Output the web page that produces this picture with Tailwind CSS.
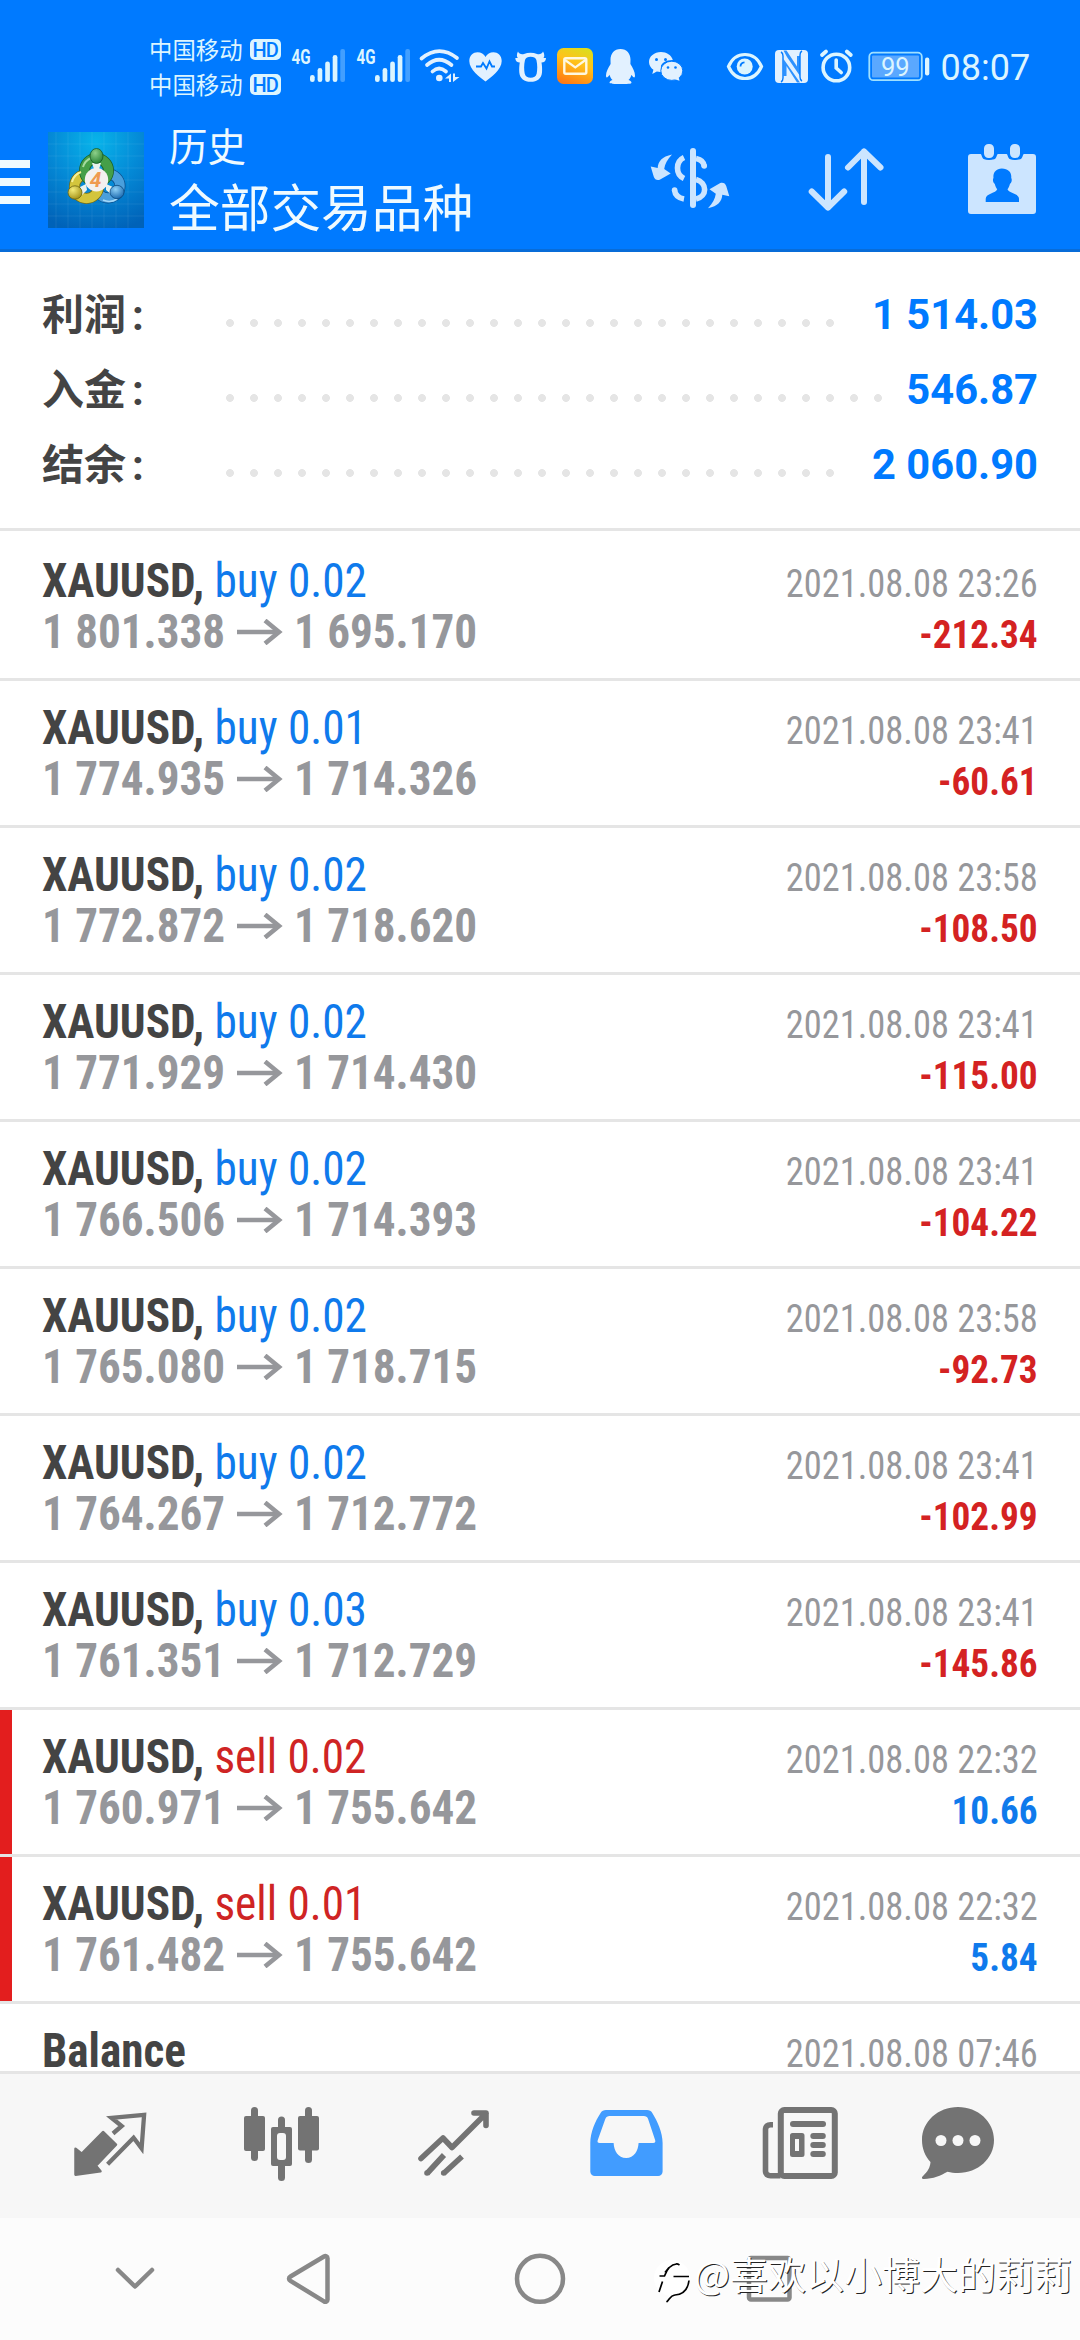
<!DOCTYPE html>
<html lang="zh-CN">
<head>
<meta charset="utf-8">
<title>历史</title>
<script src="https://cdn.jsdelivr.net/npm/@tailwindcss/browser@4"></script>
</head>
<body class="w-[1080px] h-[2340px] overflow-hidden bg-white font-['Roboto','Noto_Sans_CJK_SC',sans-serif] flex flex-col">

<!-- status bar -->
<div class="h-[108px] shrink-0 bg-[#007aff] flex text-[#dcf5ff]">
  <div class="w-[289px] pl-[149px] pt-[33px] flex flex-col text-[23.4px] leading-[32px] gap-[3px] font-['Noto_Sans_CJK_SC',sans-serif]">
    <div class="flex items-center gap-[7px]"><span class="whitespace-nowrap">中国移动</span><span class="w-[31px] h-[21px] rounded-[5px] bg-[#dcf5ff] text-[#007aff] font-['Roboto',sans-serif] font-medium text-[20px] leading-[22px] text-center tracking-[-1px]">HD</span></div>
    <div class="flex items-center gap-[7px]"><span class="whitespace-nowrap">中国移动</span><span class="w-[31px] h-[21px] rounded-[5px] bg-[#dcf5ff] text-[#007aff] font-['Roboto',sans-serif] font-medium text-[20px] leading-[22px] text-center tracking-[-1px]">HD</span></div>
  </div>
  <svg class="w-[65px] h-[108px]" viewBox="289 0 65 108" fill="currentColor"><text x="291.5" y="64" font-size="20" font-weight="700" textLength="19" lengthAdjust="spacingAndGlyphs">4G</text><rect x="310" y="75" width="4.7" height="7" rx="2.3"/><rect x="317.6" y="68" width="4.7" height="14" rx="2.3"/><rect x="325.2" y="61.5" width="4.7" height="20.5" rx="2.3"/><rect x="332.7" y="55" width="4.7" height="27" rx="2.3"/><rect x="340.3" y="49" width="4.7" height="33" rx="2" opacity=".3"/></svg>
  <svg class="w-[64px] h-[108px]" viewBox="289 0 64 108" fill="currentColor"><text x="291.5" y="64" font-size="20" font-weight="700" textLength="19" lengthAdjust="spacingAndGlyphs">4G</text><rect x="310" y="75" width="4.7" height="7" rx="2.3"/><rect x="317.6" y="68" width="4.7" height="14" rx="2.3"/><rect x="325.2" y="61.5" width="4.7" height="20.5" rx="2.3"/><rect x="332.7" y="55" width="4.7" height="27" rx="2.3"/><rect x="340.3" y="49" width="4.7" height="33" rx="2" opacity=".3"/></svg>
  <!-- wifi -->
  <svg class="w-[46px] h-[108px]" viewBox="418 0 46 108" fill="none" stroke="#e2f1ff" stroke-width="3.7" stroke-linecap="round"><path d="M421.5 58.5Q439 44 457 58M427 65Q439 54.5 451.5 65M432.5 71.5Q439 65.500 446 71.500"/><circle cx="439.300" cy="78" r="3.300" fill="#e2f1ff" stroke="none"/><path d="M451 73.500v8.500h-2v-3.500h-4zM453 73.500h2v3.500h4.500l-6.500 5z" fill="#e2f1ff" stroke="none"/></svg>
  <!-- heart rate -->
  <svg class="w-[44px] h-[108px]" viewBox="464 0 44 108"><path d="M485.500 81.500C480 77 469.300 70 469.300 61c0-5.500 4-8.700 8.200-8.700 3.500 0 6.500 1.800 8 4.700 1.500-2.900 4.500-4.700 8-4.700 4.200 0 8.200 3.200 8.200 8.700 0 9-10.700 16-16.200 20.500z" fill="#e2f1ff"/><path d="M476 66.500h5l2-3.500 3.500 5.500 3-7 2.500 5h3" fill="none" stroke="#007aff" stroke-width="1.800"/></svg>
  <!-- ox -->
  <svg class="w-[44px] h-[108px]" viewBox="508 0 44 108" fill="#e2f1ff"><path fill-rule="evenodd" d="M518 51.500c1 2.500 3.500 3.200 6 2.500 4-1.700 9-1.700 13 0 2.500.7 5 0 6-2.500 1.600 2.500 1.700 5 .5 6.500h2.500c0 3-2 4.500-4.500 4.500.5 3 .8 6 .5 10-.4 6-5 9.300-11.300 9.300s-11-3.300-11.400-9.300c-.3-4 0-7 .5-10-2.500 0-4.500-1.500-4.500-4.500h2.500c-1.200-1.500-1.200-4 .2-6.500zM525 60c-1.200 5-1 9.500-.3 13.500.6 3 3 4.300 6 4.300s5.400-1.300 6-4.300c.7-4 .9-8.500-.3-13.500-.8-2.500-2.700-3.200-5.700-3.200s-4.900.7-5.700 3.200z"/></svg>
  <!-- mail -->
  <svg class="w-[48px] h-[108px]" viewBox="552 0 48 108"><defs><linearGradient id="m" x1=".7" y1="0" x2=".3" y2="1"><stop offset="0" stop-color="#dddc1c"/><stop offset=".4" stop-color="#ffc21a"/><stop offset="1" stop-color="#ff7a14"/></linearGradient></defs><rect x="557" y="48" width="36" height="36" rx="6.500" fill="url(#m)"/><rect x="564.300" y="58.300" width="22" height="15.500" rx="1.500" fill="none" stroke="#fff8e0" stroke-width="2.400"/><path d="M565 60l10.300 7.500L585.500 60" fill="none" stroke="#fff8e0" stroke-width="2.200"/></svg>
  <!-- penguin -->
  <svg class="w-[42px] h-[108px]" viewBox="600 0 42 108" fill="#e2f1ff"><path d="M620.500 49c-6.300 0-10 4.700-10 10.500l.1 4.500c-2.500 4-4.600 8-4.600 11.500 0 2.800 1.500 2.500 3.500-.8.600 2.100 1.600 3.900 3 5.300-2 .8-3 1.700-3 2.600 0 1.200 2 1.400 5 1.400h12c3 0 5-.2 5-1.400 0-.9-1-1.800-3-2.600 1.400-1.400 2.400-3.200 3-5.300 2 3.300 3.500 3.600 3.500.8 0-3.500-2.100-7.500-4.600-11.500l.1-4.500c0-5.800-3.700-10.500-10-10.500z"/></svg>
  <!-- chat bubbles -->
  <svg class="w-[78px] h-[108px]" viewBox="642 0 78 108" fill="#e2f1ff"><path d="M661 52c-6.700 0-12 4.400-12 10 0 3.200 1.700 5.900 4.400 7.700l-1.100 4.300 4.500-2.500 4 .5"/><path d="M661 52c5.500 0 10.500 3.200 11.800 8-7 0-12.500 3-12.500 9l.5 3-9-4z"/><ellipse cx="671.800" cy="70.800" rx="11" ry="9.600" stroke="#007aff" stroke-width="1"/><path d="M674 79l5.500 1.700-1-4z"/><g fill="#007aff"><circle cx="656.500" cy="59.500" r="1.500"/><circle cx="665.500" cy="59.500" r="1.500"/><circle cx="668" cy="67.500" r="1.300"/><circle cx="675.500" cy="67.500" r="1.300"/></g></svg>
  <!-- eye -->
  <svg class="w-[50px] h-[108px]" viewBox="720 0 50 108" fill="none" stroke="currentColor" stroke-width="3.200"><path d="M728.500 66.500C732 58.500 738 54.500 745 54.500s13 4 16.500 12C758 74.500 752 78.500 745 78.500s-13-4-16.500-12z"/><circle cx="744.700" cy="66.500" r="8" fill="currentColor" stroke="none"/><path d="M740.500 66.500c0-2.500 1.500-4 4-4.200" stroke="#007aff" stroke-width="1.800"/></svg>
  <!-- nfc -->
  <svg class="w-[45px] h-[108px]" viewBox="770 0 45 108"><rect x="775" y="50" width="33" height="33" rx="4" fill="#e2f1ff"/><path d="M781 52q2 1 2 4v22q0 3-2 4M802 51q-2 1-2 4v22q0 3 2 4" stroke="#007aff" stroke-width="1.400" fill="none"/><path d="M783.500 50.500l3 0 10.500 16V56h3v20l-13-19zM800 82.500h-3L786.500 66V76h-3V59z" fill="#007aff" opacity=".8"/></svg>
  <!-- alarm -->
  <svg class="w-[45px] h-[108px]" viewBox="815 0 45 108" fill="none" stroke="currentColor" stroke-width="3.600" stroke-linecap="round"><circle cx="836.400" cy="67.500" r="13.300"/><path d="M822 55l4-3.500M850.800 55l-4-3.500" stroke-width="3.800"/><path d="M836.200 60v8l5 4.500"/></svg>
  <!-- battery and time -->
  <svg class="w-[220px] h-[108px]" viewBox="860 0 220 108" fill="currentColor"><rect x="869.300" y="52.700" width="52.500" height="27.500" rx="4" fill="none" stroke="#9fe0ff" stroke-width="1.800"/><rect x="872" y="55.500" width="47" height="22" rx="1" fill="#5aa8ff"/><rect x="925" y="57.500" width="4.300" height="18" rx="2"/><text x="881" y="75.500" font-size="25.500">99</text><text x="940.500" y="80" font-size="36">08:07</text></svg>
</div>

<!-- app bar -->
<header class="h-[144px] shrink-0 bg-[#007aff] border-b-3 border-[#086cd8] flex items-start text-[#effaff]">
  <div class="w-[30px] mt-[52px] flex flex-col gap-[10px]"><i class="h-2 bg-[#effaff]"></i><i class="h-2 bg-[#effaff]"></i><i class="h-2 bg-[#effaff]"></i></div>
  <svg class="ml-[18px] mt-6 w-24 h-24" viewBox="0 0 96 96">
    <defs>
      <radialGradient id="bg" cx=".5" cy=".1" r=".95"><stop offset="0" stop-color="#08b4ea"/><stop offset=".5" stop-color="#0489d6"/><stop offset="1" stop-color="#0062b8"/></radialGradient>
      <radialGradient id="g" cx=".4" cy=".3" r=".8"><stop offset="0" stop-color="#8ed08a"/><stop offset="1" stop-color="#1c7a2c"/></radialGradient>
      <radialGradient id="y" cx=".35" cy=".3" r=".8"><stop offset="0" stop-color="#f4ec7a"/><stop offset="1" stop-color="#9c8a10"/></radialGradient>
      <radialGradient id="b" cx=".4" cy=".3" r=".8"><stop offset="0" stop-color="#8fd0f6"/><stop offset="1" stop-color="#0d5ea8"/></radialGradient>
    </defs>
    <rect width="96" height="96" fill="url(#bg)"/>
    <path d="M8 0v96M20 0v96M32 0v96M44 0v96M56 0v96M68 0v96M80 0v96M0 12h96M0 24h96M0 36h96M0 48h96M0 60h96M0 72h96M0 84h96" stroke="#fff" stroke-opacity=".07"/>
    <g fill="none"><circle cx="60" cy="54" r="12" stroke="#0b4f8c" stroke-width="11"/><circle cx="60" cy="54" r="12" stroke="#4a9fdc" stroke-width="9.500"/>
    <circle cx="38.500" cy="54.500" r="12" stroke="#756c14" stroke-width="11"/><circle cx="38.500" cy="54.500" r="12" stroke="#d3c53c" stroke-width="9.500"/>
    <circle cx="48.500" cy="38.500" r="12" stroke="#1b6128" stroke-width="11"/><circle cx="48.500" cy="38.500" r="12" stroke="#459f48" stroke-width="9.500"/>
    <path d="M35 35a14 14 0 0 1 8-9" stroke="#a5dba0" stroke-width="2"/><path d="M24 50a14 14 0 0 1 9-10" stroke="#f6f09a" stroke-width="2"/><path d="M69 67a15 15 0 0 1-14 1" stroke="#a5d8f8" stroke-width="1.500"/></g>
    <path d="M44 31h9l-2 6h-5zM32 55l6-3 1 6-5 5zM65 55l-7-3v6l6 5z" fill="#e9f2ee"/>
    <ellipse cx="48.500" cy="24" rx="6.500" ry="7.500" fill="url(#g)" stroke="#175a24" stroke-width=".8"/>
    <ellipse cx="27" cy="60.500" rx="7" ry="6.700" fill="url(#y)" stroke="#6b6410" stroke-width=".8"/>
    <ellipse cx="69" cy="60" rx="7" ry="6.700" fill="url(#b)" stroke="#0b4a80" stroke-width=".8"/>
    <circle cx="48.500" cy="47.800" r="11.700" fill="#f3f0ef"/>
    <text x="47.500" y="55.300" text-anchor="middle" font-size="21" font-weight="700" font-style="italic" fill="#ef9a50">4</text>
  </svg>
  <div class="ml-[25px] mt-[8px] w-[451px] font-['Noto_Sans_CJK_SC',sans-serif] whitespace-nowrap">
    <div class="text-[38.500px] leading-[56px]">历史</div>
    <div class="text-[50.700px] leading-[66px]">全部交易品种</div>
  </div>
  <svg class="w-[150px] h-[141px]" viewBox="620 108 150 141" fill="none" stroke="#cce5ff" stroke-width="5.600"><path d="M693 151v54" stroke-width="6" stroke-linecap="round"/><path d="M684 157.500a11 11.500 0 0 0 0 21M696 179.500c11.500 3 11.500 17 0 19.500M674.500 190c.5 4.500 4 8 9.500 9"/><path d="M696 158.500c5 1 8 4 8.300 8" /><circle cx="704.200" cy="166" r="2.800" fill="#cce5ff" stroke="none"/><circle cx="674.600" cy="190" r="2.800" fill="#cce5ff" stroke="none"/><g fill="#cce5ff" stroke="none"><path d="M672 154.500c-10 2-14 7-14.300 13.500l-7-1.500 3 10c1 3 3 4 6 3.300l11-6.300-6.500-4.500c.8-5 3-9.500 7.800-14.500z"/><path d="M708 208.200c10-2 14-7 14.300-13.500l7 1.500-3-10c-1-3-3-4-6-3.300l-10.800 6.300 6.300 4.500c-.8 5-3 9.500-7.800 14.500z"/></g></svg>
  <svg class="w-[150px] h-[141px]" viewBox="770 108 150 141" fill="none" stroke="#cce5ff" stroke-width="6" stroke-linecap="round" stroke-linejoin="round"><path d="M828 157v50.500M811.700 191.500L828 207.500l16.200-16M864 202v-50.500M848 167.500l16-16 16.500 16"/></svg>
  <svg class="w-[160px] h-[141px]" viewBox="920 108 160 141"><path fill="#cce5ff" d="M971 154h9.500c1.500 0 1 5.500 5 5.500h7.500c4 0 3.500-5.500 5-5.500h8.500c1.500 0 1 5.500 5 5.500h7.500c4 0 3.500-5.500 5-5.500h9a3 3 0 0 1 3 3v54a3 3 0 0 1-3 3h-62a3 3 0 0 1-3-3v-54a3 3 0 0 1 3-3z"/><rect x="983" y="143" width="12" height="16" rx="5.500" fill="#cce5ff" stroke="#007aff" stroke-width="2"/><rect x="1009" y="143" width="12" height="16" rx="5.500" fill="#cce5ff" stroke="#007aff" stroke-width="2"/><path fill="#007aff" d="M1001.800 168.500c-6 0-9 4.500-8.300 9.500-1.200 1.500-.3 5 1.200 5.800.7 2.700 1.500 4.200 2.500 5.500-1 4-11.500 4-11.500 9.500v3.200h33.300v-3.200c0-5.500-10.500-5.500-11.500-9.500 1-1.300 1.800-2.800 2.500-5.500 1.500-.8 2.400-4.300 1.200-5.800.7-5-2.400-9.500-9.400-9.500z"/></svg>
</header>

<!-- totals -->
<section class="h-[279px] shrink-0 border-b-3 border-[#e5e5e5] pt-[26px] pl-[42px] pr-[42px] text-[#444]">
  <div class="h-[75px] flex items-center"><b class="w-[176px] text-[42px]">利润<span class="ml-[6px]">:</span></b><i class="mt-[15px] w-[624px] h-2 bg-[radial-gradient(circle,#e5e5e5_3.600px,transparent_4.200px)] bg-[length:24px_8px]"></i><b class="ml-auto text-[41.700px] text-[#007aff]">1 514.03</b></div>
  <div class="h-[75px] flex items-center"><b class="w-[176px] text-[42px]">入金<span class="ml-[6px]">:</span></b><i class="mt-[15px] w-[672px] h-2 bg-[radial-gradient(circle,#e5e5e5_3.600px,transparent_4.200px)] bg-[length:24px_8px]"></i><b class="ml-auto text-[41.700px] text-[#007aff]">546.87</b></div>
  <div class="h-[75px] flex items-center"><b class="w-[176px] text-[42px]">结余<span class="ml-[6px]">:</span></b><i class="mt-[15px] w-[624px] h-2 bg-[radial-gradient(circle,#e5e5e5_3.600px,transparent_4.200px)] bg-[length:24px_8px]"></i><b class="ml-auto text-[41.700px] text-[#007aff]">2 060.90</b></div>
</section>

<!-- deals -->
<main id="deals" class="h-[1540px] shrink-0 overflow-hidden pt-[3px] font-['Roboto_Condensed','Roboto',sans-serif] [font-stretch:75%]"></main>

<!-- tab bar -->
<nav class="h-[147px] shrink-0 bg-[#f7f7f7] border-t-3 border-[#e5e5e5] flex">
  <svg class="w-[196px] h-[144px]" viewBox="0 2074 196 144"><path d="M103 2132l13 12.700-20 21 4.500 5.500-25 3.500v-26l6.300 5z" fill="#737373" stroke="#737373" stroke-width="2.500" stroke-linejoin="round"/><path d="M113 2133.500l8.700-7.500-10.200-8.200 32.600-3-2.500 33.500-8-10.600-26 26.500" fill="none" stroke="#737373" stroke-width="4.300"/></svg>
  <svg class="w-[172px] h-[144px]" viewBox="196 2074 172 144" fill="#737373"><rect x="244" y="2116" width="21" height="35" rx="2"/><rect x="251" y="2107" width="7" height="54" rx="3.500"/><rect x="298" y="2116" width="21" height="34.500" rx="2"/><rect x="305" y="2107" width="7" height="56" rx="3.500"/><rect x="278" y="2116.500" width="7" height="64.500" rx="3.500"/><rect x="271" y="2127" width="21" height="39" rx="2"/><rect x="277" y="2133" width="9" height="27" rx="3" fill="#f7f7f7"/></svg>
  <svg class="w-[172px] h-[144px]" viewBox="368 2074 172 144" fill="none" stroke="#737373" stroke-width="5.600" stroke-linejoin="round"><path d="M421 2158.500l22-20.500 9 9.500 34-34M474 2113h12v12.500" stroke-linecap="round"/><path d="M427 2173.500l17-18.500M443.500 2173.500l18.500-17"/><circle cx="427" cy="2173" r="2.800" fill="#737373" stroke="none"/><circle cx="443.700" cy="2173" r="2.800" fill="#737373" stroke="none"/></svg>
  <svg class="w-[173px] h-[144px]" viewBox="540 2074 173 144"><path fill="#419cff" fill-rule="evenodd" d="M606 2110h41c2.500 0 4 .8 5.300 3 5 8 10.300 19.500 10.300 30v28.500a4.500 4.500 0 0 1-4.500 4.500h-63.300a4.500 4.500 0 0 1-4.500-4.500V2143c0-10.500 5-22 10.300-30 1.400-2.200 2.900-3 5.400-3zM609.500 2116c-2 0-3.300.8-4.200 3l-7.500 21c-.8 2 0 3 1.800 3h14c.5 8 4.500 15 12.500 15s12-7 12.500-15h14.500c2 0 2.700-1 2-3l-7-21c-.8-2.200-2.200-3-4.300-3z"/></svg>
  <svg class="w-[166px] h-[144px]" viewBox="713 2074 166 144" fill="#737373"><rect x="780.800" y="2110" width="54" height="66" rx="3.500" fill="none" stroke="#737373" stroke-width="6"/><path d="M773 2124.800h-2.500c-3 0-5 1.500-5 4.500v42c0 3 2 4.500 5 4.500h10" fill="none" stroke="#737373" stroke-width="5.600"/><rect x="790" y="2121" width="36" height="6" rx="3"/><path fill-rule="evenodd" d="M792.500 2133h9.500a2.500 2.500 0 0 1 2.500 2.500v19a2.500 2.500 0 0 1-2.500 2.500h-9.500a2.500 2.500 0 0 1-2.500-2.500v-19a2.500 2.500 0 0 1 2.500-2.500zM795 2139v12h4v-12z"/><rect x="810.300" y="2133" width="15.500" height="6" rx="3"/><rect x="810.300" y="2142" width="15.500" height="6" rx="3"/><rect x="810.300" y="2151" width="15.500" height="6" rx="3"/></svg>
  <svg class="w-[201px] h-[144px]" viewBox="879 2074 201 144"><path fill="#737373" d="M958 2107c20 0 36 14.500 36 33s-16 33-36 33c-4 0-7-.4-10.500-1.200-6.500 3.700-14.500 7.200-23.500 7.200-2.500 0-2.500-1.700-1-3 4.500-4.500 7-8 7.500-14-5.500-6-8.500-13.500-8.500-22 0-18.500 16-33 36-33z"/><g fill="#f7f7f7"><circle cx="941" cy="2140.500" r="5.500"/><circle cx="958" cy="2140.500" r="5.500"/><circle cx="975" cy="2140.500" r="5.500"/></g></svg>
</nav>

<!-- system navigation -->
<footer class="relative h-[122px] shrink-0 bg-[#fcfcfc]">
  <svg class="w-[1080px] h-[122px]" viewBox="0 2218 1080 122" fill="none" stroke="#888" stroke-width="4.500" stroke-linejoin="round" stroke-linecap="round"><path d="M118 2270l17 16.500 17-16.500"/><path d="M290.500 2276.500l33.500-20c1.500-.8 3.500-.3 3.500 1.700v41.500c0 2-2 2.500-3.500 1.700l-33.500-20.500c-2-1.300-2-3.200 0-4.400z"/><circle cx="540" cy="2278.800" r="23"/><rect x="749" y="2258" width="40.500" height="41.500" rx="2"/>
  <circle cx="672" cy="2278" r="18" fill="#fff" stroke="none"/><path d="M659.500 2276h5c2-5.500 6-11.500 12-12 M673.500 2276.500h15.500M662.500 2281.500l-3.500 10.500M689 2280.500c-1 8-5.500 14-14 14.500-5 .5-5.500 5-8.500 7M665 2272.500l4-5M676 2264c1.500-.5 2.500.3 3.500 1" stroke="#000" stroke-width="1.700" stroke-linecap="butt"/></svg>
  <div class="absolute left-[694px] top-[27px] whitespace-nowrap text-[38px] leading-[56px] font-['Noto_Sans_CJK_SC',sans-serif] font-normal text-white [text-shadow:1px_1px_0_#222]">@喜欢以小博大的莉莉</div>
</footer>

<script>
const deals = [
  ['buy 0.02','1 801.338','1 695.170','23:26','-212.34'],
  ['buy 0.01','1 774.935','1 714.326','23:41','-60.61'],
  ['buy 0.02','1 772.872','1 718.620','23:58','-108.50'],
  ['buy 0.02','1 771.929','1 714.430','23:41','-115.00'],
  ['buy 0.02','1 766.506','1 714.393','23:41','-104.22'],
  ['buy 0.02','1 765.080','1 718.715','23:58','-92.73'],
  ['buy 0.02','1 764.267','1 712.772','23:41','-102.99'],
  ['buy 0.03','1 761.351','1 712.729','23:41','-145.86'],
  ['sell 0.02','1 760.971','1 755.642','22:32','10.66'],
  ['sell 0.01','1 761.482','1 755.642','22:32','5.84']
];
const arrow = '<svg class="w-[46px] h-[26px]" viewBox="0 0 46 26" fill="none" stroke="#96979b" stroke-width="4.6"><path d="M0 13h42"/><path d="M28 1.500L42 13 28 24.500" stroke-linejoin="miter"/></svg>';
document.getElementById('deals').innerHTML = deals.map(([op, from, to, time, profit]) => {
  const sell = op[0] === 's';
  return `<div class="h-[147px] border-b-3 border-[#e5e5e5] flex justify-between pr-[42px] whitespace-nowrap">
    <div class="flex"><i class="w-3 h-[144px] ${sell ? 'bg-[#e31e1e]' : ''}"></i>
    <div class="ml-[30px] pt-[21px] text-[48px] leading-[51px]">
      <div class="text-[#444] origin-left scale-x-[0.943]"><b>XAUUSD,</b> <span class="${sell ? 'text-[#cf2424]' : 'text-[#0f7aec]'}">${op}</span></div>
      <div class="flex items-center text-[#96979b] font-bold"><span class="w-[195px]"><span class="block w-max origin-left scale-x-[0.94]">${from}</span></span>${arrow}<span class="ml-[11px] origin-left scale-x-[0.94]">${to}</span></div>
    </div></div>
    <div class="pt-[25px] text-[39px] leading-[51px] text-right">
      <div class="text-[#96979b] origin-right scale-x-[0.934]">2021.08.08 ${time}</div>
      <div class="font-bold origin-right scale-x-[0.955] ${sell ? 'text-[#0f7aec]' : 'text-[#d42222]'}">${profit}</div>
    </div>
  </div>`;
}).join('') + `<div class="h-[147px] flex justify-between pl-[42px] pr-[42px] whitespace-nowrap">
    <div class="pt-[21px] text-[48px] leading-[51px] font-bold text-[#444] origin-left scale-x-[0.94]">Balance</div>
    <div class="pt-[25px] text-[39px] leading-[51px] text-[#96979b] origin-right scale-x-[0.934]">2021.08.08 07:46</div>
  </div>`;
</script>
</body>
</html>
